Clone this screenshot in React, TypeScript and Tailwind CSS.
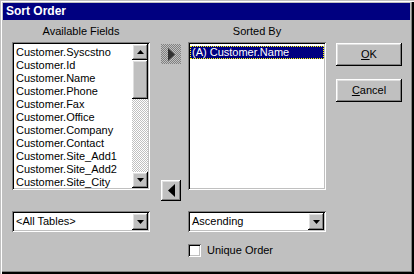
const raised =
  "bg-[#c0c0c0] shadow-[inset_-1px_-1px_0_#000,inset_1px_1px_0_#fff,inset_-2px_-2px_0_#808080,inset_2px_2px_0_#dfdfdf]"
const sunken =
  "bg-white shadow-[inset_1px_1px_0_#808080,inset_-1px_-1px_0_#fff,inset_2px_2px_0_#000,inset_-2px_-2px_0_#c0c0c0]"
const checker = "bg-[repeating-conic-gradient(#c0c0c0_0_25%,#fff_0_50%)] bg-[length:2px_2px]"

const fields = [
  "Customer.Syscstno",
  "Customer.Id",
  "Customer.Name",
  "Customer.Phone",
  "Customer.Fax",
  "Customer.Office",
  "Customer.Company",
  "Customer.Contact",
  "Customer.Site_Add1",
  "Customer.Site_Add2",
  "Customer.Site_City",
]

function Tri({ dir }: { dir: "up" | "down" }) {
  return (
    <svg width="7" height="4" viewBox="0 0 7 4">
      {dir === "up" ? <polygon points="3.5,0 7,4 0,4" fill="#000" /> : <polygon points="0,0 7,0 3.5,4" fill="#000" />}
    </svg>
  )
}

function Combo({ value }: { value: string }) {
  return (
    <div className={`${sunken} h-[21px] w-[138px] flex items-center pl-[4px] pr-[2px]`}>
      <span className="flex-1 leading-[13px]">{value}</span>
      <div className={`${raised} w-[16px] h-[17px] grid place-items-center`}>
        <Tri dir="down" />
      </div>
    </div>
  )
}

export default function App() {
  return (
    <div className="w-[414px] h-[274px] bg-[#c0c0c0] text-black text-[11px] font-['Liberation_Sans',Arial,sans-serif] shadow-[inset_1px_1px_0_#c0c0c0,inset_2px_2px_0_#fff,inset_-2px_-2px_0_#000,inset_-3px_-3px_0_#808080] pt-[3px] pl-[3px] pr-[4px]">
      <div className="h-[17px] bg-[#000080] text-white font-bold text-[12px] leading-[17px] pl-[3px]">Sort Order</div>

      <div className="flex pl-[9px] pt-[1px]">
        {/* available fields */}
        <div className="w-[138px] flex flex-col">
          <div className="pt-[4px] h-[21px] leading-[13px] text-center">Available Fields</div>
          <div className={`${sunken} h-[148px] p-[2px] flex`}>
            <div className="flex-1 pl-[2px] pt-[2px] overflow-hidden">
              {fields.map((f) => (
                <div key={f} className="h-[13px] leading-[13px] whitespace-nowrap">
                  {f}
                </div>
              ))}
            </div>
            <div className="w-[16px] flex flex-col">
              <div className={`${raised} h-[16px] grid place-items-center`}>
                <Tri dir="up" />
              </div>
              <div className={`${raised} h-[39px]`} />
              <div className={`flex-1 ${checker}`} />
              <div className={`${raised} h-[16px] grid place-items-center`}>
                <Tri dir="down" />
              </div>
            </div>
          </div>
          <div className="mt-[21px]">
            <Combo value="<All Tables>" />
          </div>
        </div>

        {/* move buttons */}
        <div className="w-[20px] ml-[11px] flex flex-col">
          <div className="mt-[23px] h-[20px] grid place-items-center bg-[repeating-conic-gradient(#c0c0c0_0_25%,#808080_0_50%)] bg-[length:2px_2px]">
            <svg width="7" height="13" viewBox="0 0 7 13">
              <polygon points="0,0 7,6.5 0,13" fill="#303030" />
            </svg>
          </div>
          <div className={`${raised} mt-[116px] h-[21px] grid place-items-center`}>
            <svg width="7" height="13" viewBox="0 0 7 13">
              <polygon points="7,0 0,6.5 7,13" fill="#000" />
            </svg>
          </div>
        </div>

        {/* sorted by */}
        <div className="w-[138px] ml-[7px] flex flex-col">
          <div className="pt-[4px] h-[21px] leading-[13px] text-center">Sorted By</div>
          <div className={`${sunken} h-[148px] p-[2px]`}>
            <div className="mt-[2px] h-[13px] leading-[11px] bg-[#000080] text-white border border-dotted border-[#ffff00] pl-[1px] whitespace-nowrap">
              (A) Customer.Name
            </div>
          </div>
          <div className="mt-[21px]">
            <Combo value="Ascending" />
          </div>
          <div className="mt-[12px] flex items-center gap-[6px]">
            <div className={`${sunken} w-[13px] h-[13px]`} />
            <span className="leading-[13px]">Unique Order</span>
          </div>
        </div>

        {/* action buttons */}
        <div className="w-[66px] ml-[10px] flex flex-col">
          <button className={`${raised} mt-[22px] h-[23px] leading-[13px]`}>
            <span className="underline underline-offset-1">O</span>K
          </button>
          <button className={`${raised} mt-[13px] h-[23px] leading-[13px]`}>
            <span className="underline underline-offset-1">C</span>ancel
          </button>
        </div>
      </div>
    </div>
  )
}
